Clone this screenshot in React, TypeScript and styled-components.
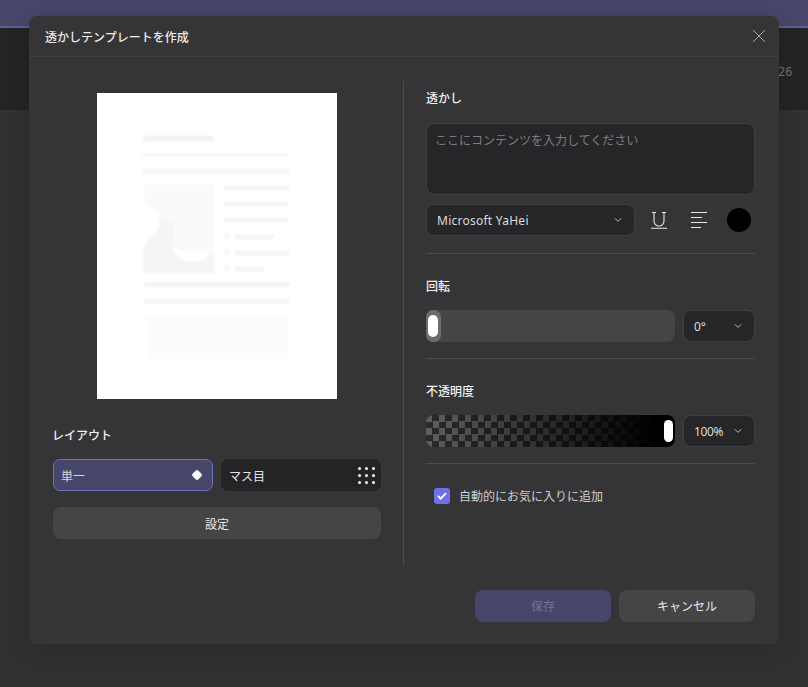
import React from 'react'
import styled, { createGlobalStyle } from 'styled-components'

const GlobalStyle = createGlobalStyle`
  html, body {
    margin: 0;
    padding: 0;
    height: 100%;
    background: #323132;
    overflow: hidden;
  }
  body {
    font-family: "Noto Sans CJK JP", "Noto Sans", sans-serif;
    -webkit-font-smoothing: antialiased;
  }
  * { box-sizing: border-box; }
`

const Page = styled.div`
  position: relative;
  width: 808px;
  height: 687px;
  display: flex;
  flex-direction: column;
  overflow: hidden;
`
const TopStrip = styled.div`
  height: 26px;
  background: #46476a;
`
const AccentLine = styled.div`
  height: 2px;
  background: #5c5d92;
`
const DarkBand = styled.div`
  height: 82px;
  background: #252424;
  display: flex;
  justify-content: flex-end;
  align-items: center;
  padding: 4px 16px 0 0;
  font-size: 12px;
  color: #757475;
  font-family: "Noto Sans", sans-serif;
`

const Modal = styled.div`
  position: absolute;
  left: 29px;
  top: 16px;
  width: 750px;
  height: 628px;
  background: #353436;
  border-radius: 8px;
  box-shadow: 0 4px 24px rgba(0, 0, 0, 0.18);
  display: flex;
  flex-direction: column;
`
const Header = styled.div`
  height: 41px;
  flex: none;
  border-bottom: 1px solid #414042;
  display: flex;
  align-items: center;
  justify-content: space-between;
  padding: 0 13px 0 16px;
`
const Title = styled.div`
  font-size: 12px;
  font-weight: 500;
  color: #ececec;
`
const CloseIcon = styled.svg`
  width: 14px;
  height: 14px;
  display: block;
  stroke: #a8a7a8;
  stroke-width: 1;
  fill: none;
`
const Body = styled.div`
  display: flex;
  margin-top: 24px;
  height: 485px;
  flex: none;
`
const LeftCol = styled.div`
  width: 375px;
  flex: none;
  padding: 12px 22px 0 24px;
  border-right: 1px solid #4c4b4d;
  display: flex;
  flex-direction: column;
`
const PreviewSvg = styled.svg`
  width: 240px;
  height: 306px;
  display: block;
  align-self: center;
  flex: none;
`
const SectionLabel = styled.div`
  font-size: 12px;
  font-weight: 500;
  line-height: 18px;
  color: #f0f0f0;
`
const LayoutLabel = styled(SectionLabel)`
  margin-top: 27px;
  margin-left: -1px;
`
const LayoutRow = styled.div`
  display: flex;
  gap: 8px;
  margin-top: 15px;
`
const LayoutOption = styled.div<{ $active?: boolean }>`
  width: 160px;
  height: 32px;
  border-radius: 7px;
  display: flex;
  align-items: center;
  justify-content: space-between;
  font-size: 12px;
  padding: 0 5px 0 7px;
  color: ${p => (p.$active ? '#d5d5df' : '#e4e4e4')};
  background: ${p => (p.$active ? '#45466a' : '#242325')};
  border: 1px solid ${p => (p.$active ? '#6f6fbe' : '#242325')};
`
const SingleDot = styled.span`
  width: 8px;
  height: 8px;
  margin-right: 6px;
  border-radius: 2px;
  background: #fff;
  transform: rotate(45deg);
`
const DotGrid = styled.span`
  display: grid;
  grid-template-columns: repeat(3, 3px);
  grid-auto-rows: 3px;
  gap: 4px;
  & > i {
    display: block;
    border-radius: 50%;
    background: #fff;
  }
`
const GreyButton = styled.div`
  height: 32px;
  border-radius: 8px;
  background: #464546;
  color: #e8e8e8;
  font-size: 12px;
  display: flex;
  align-items: center;
  justify-content: center;
`
const SettingsButton = styled(GreyButton)`
  margin-top: 16px;
`
const RightCol = styled.div`
  flex: 1;
  padding: 8px 24px 0 22px;
  display: flex;
  flex-direction: column;
`
const Section = styled.div`
  border-bottom: 1px solid #4c4b4d;
  padding-bottom: 16px;
  margin-bottom: 23px;
`
const WatermarkSection = styled(Section)`
  padding-bottom: 17px;
`
const TextArea = styled.div`
  height: 72px;
  margin-top: 16px;
  border-radius: 8px;
  background: #262528;
  border: 1px solid #3f3e41;
  padding: 7px 8px;
  font-size: 12px;
  line-height: 18px;
  color: #7f7e80;
`
const FontRow = styled.div`
  display: flex;
  align-items: center;
  margin-top: 9px;
`
const Select = styled.div<{ $width: number; $spacing?: number }>`
  width: ${p => p.$width}px;
  height: 32px;
  flex: none;
  border-radius: 8px;
  background: #262528;
  border: 1px solid #3f3e41;
  display: flex;
  align-items: center;
  justify-content: space-between;
  padding: 0 12px 0 10px;
  font-size: 12px;
  letter-spacing: ${p => p.$spacing ?? 0}px;
  color: #dcdcdc;
  font-family: "Noto Sans", sans-serif;
`
const Chevron = styled.svg`
  width: 8px;
  height: 6px;
  display: block;
  stroke: #bdbcbd;
  stroke-width: 1;
  fill: none;
  flex: none;
`
const ToolIcon = styled.svg`
  width: 18px;
  height: 18px;
  display: block;
  stroke: #e6e6e6;
  stroke-width: 1.1;
  fill: none;
  flex: none;
`
const UnderlineIcon = styled(ToolIcon)`
  margin-left: 15px;
`
const AlignIcon = styled(ToolIcon)`
  margin-left: 23px;
`
const ColorDot = styled.span`
  width: 24px;
  height: 24px;
  margin-left: 18px;
  border-radius: 50%;
  background: #000;
  flex: none;
`
const SliderRow = styled.div`
  display: flex;
  justify-content: space-between;
  margin-top: 15px;
`
const Track = styled.div`
  position: relative;
  width: 249px;
  height: 32px;
  border-radius: 8px;
  background: #464546;
`
const OpacityTrack = styled(Track)`
  overflow: hidden;
  background:
    linear-gradient(90deg, rgba(0, 0, 0, 0), #000 92%),
    repeating-conic-gradient(#2a292b 0 25%, #5f5e60 0 50%) 0 0 / 13px 13px;
`
const ThumbHalo = styled.span`
  position: absolute;
  left: 0;
  top: 0;
  width: 15px;
  height: 32px;
  border-radius: 7px;
  background: #6d6c6e;
`
const Thumb = styled.span<{ $end?: boolean }>`
  position: absolute;
  top: 5px;
  ${p => (p.$end ? 'right: 2px;' : 'left: 2px;')}
  width: ${p => (p.$end ? 9 : 10)}px;
  height: 22px;
  border-radius: 5px;
  background: #fff;
`
const CheckRow = styled.div`
  display: flex;
  align-items: center;
  gap: 9px;
  margin: 0 0 0 8px;
  font-size: 12px;
  color: #cfcfcf;
`
const CheckBox = styled.span`
  width: 16px;
  height: 16px;
  border-radius: 3px;
  background: #6f6fe6;
  display: flex;
  align-items: center;
  justify-content: center;
`
const Footer = styled.div`
  display: flex;
  justify-content: flex-end;
  gap: 8px;
  margin-top: 24px;
  padding-right: 24px;
`
const FooterGrey = styled(GreyButton)`
  width: 136px;
  font-weight: 400;
  padding-bottom: 1px;
`
const SaveButton = styled(FooterGrey)`
  background: #45466a;
  color: #74748f;
`

const Down = () => (
  <Chevron viewBox="0 0 8 6">
    <path d="M.8 1.2 4 4.4l3.2-3.2" />
  </Chevron>
)

// ぼかしたドキュメントのサムネイル
const Preview = () => (
  <PreviewSvg viewBox="0 0 240 306">
    <defs>
      <filter id="soft" x="-20%" y="-20%" width="140%" height="140%">
        <feGaussianBlur stdDeviation="1.2" />
      </filter>
    </defs>
    <rect width="240" height="306" fill="#fff" />
    <g filter="url(#soft)">
      <rect x="46" y="43" width="71" height="5" fill="#f2f1f3" />
      <rect x="46" y="60" width="145" height="4" fill="#f6f5f7" />
      <rect x="46" y="76" width="146" height="4" fill="#f4f3f5" />
      <path d="M47 91h70v88H46v-14q2-16 14-26 5-6 2-14-2-10-15-14z" fill="#fafafb" />
      <path d="M46 160q2-14 14-22 4-6 2-12l14 4 1 26q6 14 20 14 14-2 20-13v23H46z" fill="#f5f4f6" />
      <path d="M74 152q4 16 22 17 12-1 17-12-8 2-18 2-12 0-21-7z" fill="#fff" />
      <rect x="127" y="93" width="65" height="4" fill="#f3f2f4" />
      <rect x="127" y="109" width="64" height="4" fill="#f5f4f6" />
      <rect x="127" y="125" width="64" height="4" fill="#f5f4f6" />
      <rect x="127" y="141" width="5" height="5" fill="#f6f5f7" />
      <rect x="138" y="142" width="39" height="4" fill="#f3f2f4" />
      <rect x="127" y="157" width="5" height="5" fill="#f6f5f7" />
      <rect x="138" y="158" width="54" height="4" fill="#f3f2f4" />
      <rect x="127" y="173" width="5" height="5" fill="#f6f5f7" />
      <rect x="138" y="174" width="29" height="4" fill="#f3f2f4" />
      <rect x="47" y="189" width="146" height="5" fill="#f4f3f5" />
      <rect x="47" y="206" width="145" height="5" fill="#f6f5f7" />
      <rect x="49" y="223" width="143" height="43" fill="#fcfbfd" />
    </g>
  </PreviewSvg>
)

const App: React.FC = () => {
  return (
    <Page>
      <GlobalStyle />
      <TopStrip />
      <AccentLine />
      <DarkBand>26</DarkBand>
      <Modal>
        <Header>
          <Title>透かしテンプレートを作成</Title>
          <CloseIcon viewBox="0 0 14 14">
            <path d="M1 1l12 12M13 1 1 13" />
          </CloseIcon>
        </Header>
        <Body>
          <LeftCol>
            <Preview />
            <LayoutLabel>レイアウト</LayoutLabel>
            <LayoutRow>
              <LayoutOption $active>
                単一
                <SingleDot />
              </LayoutOption>
              <LayoutOption>
                マス目
                <DotGrid>
                  {Array.from({ length: 9 }).map((_, i) => (
                    <i key={i} />
                  ))}
                </DotGrid>
              </LayoutOption>
            </LayoutRow>
            <SettingsButton>設定</SettingsButton>
          </LeftCol>
          <RightCol>
            <WatermarkSection>
              <SectionLabel>透かし</SectionLabel>
              <TextArea>ここにコンテンツを入力してください</TextArea>
              <FontRow>
                <Select $width={209} $spacing={0.25}>
                  Microsoft YaHei
                  <Down />
                </Select>
                <UnderlineIcon viewBox="0 0 18 18">
                  <path d="M2 1.5h4M12 1.5h4M4 1.5V10a5 5 0 0 0 10 0V1.5M1 17.3h16" />
                </UnderlineIcon>
                <AlignIcon viewBox="0 0 18 18">
                  <path d="M0 1.5h16M0 6.5h11M0 11.5h16M0 16.5h10" />
                </AlignIcon>
                <ColorDot />
              </FontRow>
            </WatermarkSection>
            <Section>
              <SectionLabel>回転</SectionLabel>
              <SliderRow>
                <Track>
                  <ThumbHalo />
                  <Thumb />
                </Track>
                <Select $width={72}>
                  0°
                  <Down />
                </Select>
              </SliderRow>
            </Section>
            <Section>
              <SectionLabel>不透明度</SectionLabel>
              <SliderRow>
                <OpacityTrack>
                  <Thumb $end />
                </OpacityTrack>
                <Select $width={72} $spacing={-0.4}>
                  100%
                  <Down />
                </Select>
              </SliderRow>
            </Section>
            <CheckRow>
              <CheckBox>
                <svg width="10" height="8" viewBox="0 0 10 8" fill="none" stroke="#fff" strokeWidth="1.8">
                  <path d="M1 4l2.7 2.7L9 1.2" />
                </svg>
              </CheckBox>
              自動的にお気に入りに追加
            </CheckRow>
          </RightCol>
        </Body>
        <Footer>
          <SaveButton>保存</SaveButton>
          <FooterGrey>キャンセル</FooterGrey>
        </Footer>
      </Modal>
    </Page>
  )
}

export default App
